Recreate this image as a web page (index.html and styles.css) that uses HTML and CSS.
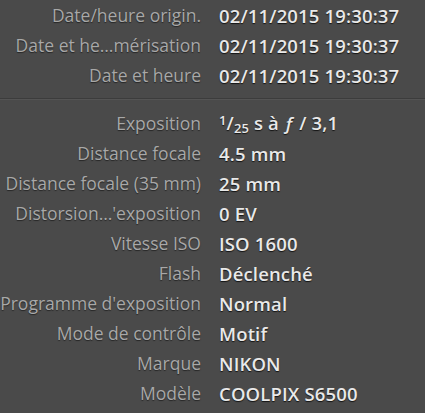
FILE: index.html
```html
<!DOCTYPE html>
<html lang="fr">
<head>
<meta charset="utf-8">
<link rel="stylesheet" href="styles.css">
</head>
<body>
<div class="panel">
  <div class="group">
    <div class="row"><span class="label">Date/heure origin.</span><span class="value">02/11/2015 19:30:37</span></div>
    <div class="row"><span class="label">Date et he…mérisation</span><span class="value">02/11/2015 19:30:37</span></div>
    <div class="row"><span class="label">Date et heure</span><span class="value">02/11/2015 19:30:37</span></div>
  </div>
  <div class="sep"></div>
  <div class="group">
    <div class="row"><span class="label">Exposition</span><span class="value"><span class="sup">1</span>/<span class="sub">25</span> s à <span class="fn">ƒ</span> / 3,1</span></div>
    <div class="row"><span class="label">Distance focale</span><span class="value">4.5 mm</span></div>
    <div class="row"><span class="label">Distance focale (35 mm)</span><span class="value">25 mm</span></div>
    <div class="row"><span class="label">Distorsion…'exposition</span><span class="value">0 EV</span></div>
    <div class="row"><span class="label">Vitesse ISO</span><span class="value">ISO 1600</span></div>
    <div class="row"><span class="label">Flash</span><span class="value">Déclenché</span></div>
    <div class="row"><span class="label">Programme d'exposition</span><span class="value">Normal</span></div>
    <div class="row"><span class="label">Mode de contrôle</span><span class="value">Motif</span></div>
    <div class="row"><span class="label">Marque</span><span class="value">NIKON</span></div>
    <div class="row"><span class="label">Modèle</span><span class="value">COOLPIX S6500</span></div>
  </div>
</div>
</body>
</html>
```
FILE: styles.css
```css
html, body {
  margin: 0;
  padding: 0;
  background: #4a4a4a;
}
.panel {
  width: 425px;
  height: 413px;
  overflow: hidden;
  font-family: "Open Sans", "Noto Sans", sans-serif;
}
.group {
  display: flex;
  flex-direction: column;
}
.row {
  display: grid;
  grid-template-columns: 201px 1fr;
  column-gap: 18px;
  height: 30px;
  align-items: center;
  white-space: nowrap;
}
.label {
  display: flex;
  justify-content: flex-end;
  font-size: 17.5px;
  color: #a8a8a8;
  text-shadow: 0 1px 1px rgba(0,0,0,0.5);
}
.value {
  font-size: 18.5px;
  font-weight: 600;
  letter-spacing: 0.15px;
  color: #e9e9e9;
  text-shadow: 0 1px 1px rgba(0,0,0,0.75);
}
.sep {
  margin: 8px 0 8px;
  height: 1px;
  background: #3c3c3c;
  border-bottom: 1px solid #545454;
}
.sup {
  font-size: 0.7em;
  vertical-align: 0.35em;
}
.sub {
  font-size: 0.7em;
  vertical-align: -0.2em;
}
.fn {
  font-style: italic;
}
```
